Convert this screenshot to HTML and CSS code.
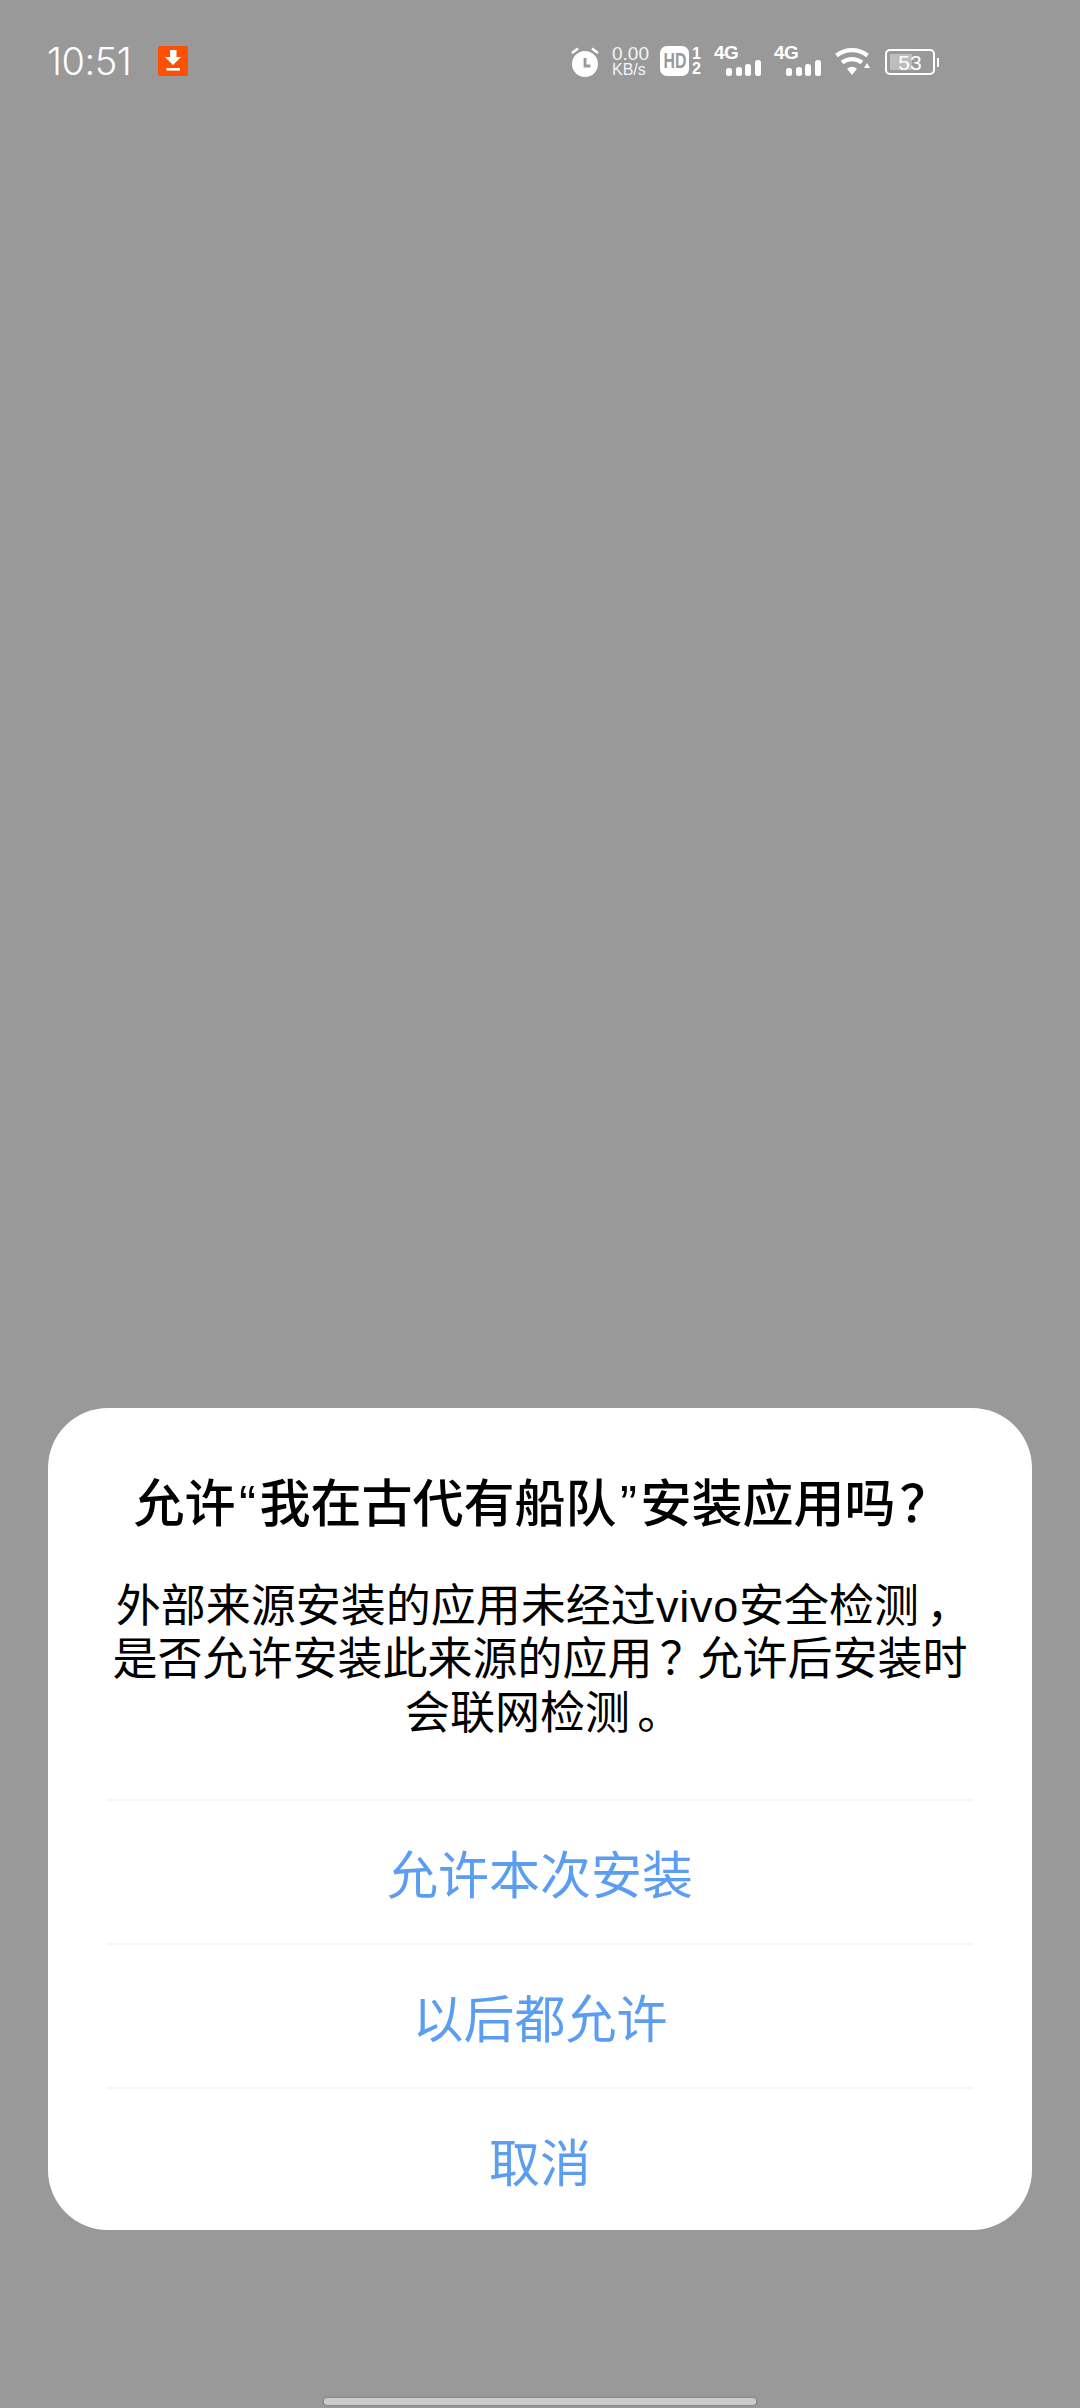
FILE: index.html
```html
<!DOCTYPE html>
<html lang="zh-CN">
<head>
<meta charset="utf-8">
<title>安装应用</title>
<link rel="stylesheet" href="styles.css">
</head>
<body>
<div class="screen">
  <header class="status">
    <div class="status-left">
      <span class="time">10:51</span>
      <svg class="dl" width="30" height="30" viewBox="0 0 30 30"><rect width="30" height="30" rx="2" fill="#fb5005"/><path d="M12 4h6.500v7h4.500l-8 8-8-8h5z" fill="#fff"/><rect x="8.500" y="22" width="13.500" height="2.600" fill="#fff"/></svg>
    </div>
    <div class="status-right">
      <svg class="alarm" width="30" height="32" viewBox="0 0 30 32"><circle cx="15" cy="18" r="13" fill="#fff"/><path d="M15 12v8h5.500" fill="none" stroke="#999" stroke-width="2.800"/><path d="M2 7l6-4.500M28 7l-6-4.500" stroke="#fff" stroke-width="2.600"/></svg>
      <div class="speed"><span class="speed-num">0.00</span><span class="speed-unit">KB/s</span></div>
      <div class="hd">
        <span class="hd-box"><span class="hd-text">HD</span></span>
        <div class="sims"><span>1</span><span>2</span></div>
      </div>
      <div class="net">
        <span class="net-label">4G</span>
        <div class="bars"><i class="b1"></i><i class="b2"></i><i class="b3"></i><i class="b4"></i></div>
      </div>
      <div class="net">
        <span class="net-label">4G</span>
        <div class="bars"><i class="b1"></i><i class="b2"></i><i class="b3"></i><i class="b4"></i></div>
      </div>
      <svg class="wifi" width="39" height="28" viewBox="0 0 39 28"><path d="M2.500 7.500A25 25 0 0 1 33.500 7.500" fill="none" stroke="#fff" stroke-width="4.200"/><path d="M8.100 14.500A16 16 0 0 1 27.900 14.500" fill="none" stroke="#fff" stroke-width="4.200"/><path d="M18 27L13 20.800A8 8 0 0 1 23 20.800z" fill="#fff"/><path d="M30 20l3-5 3 5z" fill="#fff"/></svg>
      <div class="battery"><div class="cell"><div class="fill"></div><span class="level">53</span></div><i class="nub"></i></div>
    </div>
  </header>
  <main class="spacer"></main>
  <section class="dialog">
    <h1 class="title">允许<span class="quote">“</span>我在古代有船队<span class="quote">”</span>安装应用吗<span class="punct title-mark">？</span></h1>
    <p class="message">外部来源安装的应用未经过<span class="latin">vivo</span>安全检测<span class="punct">，</span><br>是否允许安装此来源的应用<span class="punct">？</span>允许后安装时<br>会联网检测<span class="punct">。</span></p>
    <div class="actions">
      <button class="action">允许本次安装</button>
      <button class="action">以后都允许</button>
      <button class="action">取消</button>
    </div>
  </section>
  <footer class="nav"><div class="home"></div></footer>
</div>
</body>
</html>
```

FILE: styles.css
```css
* { box-sizing: border-box; margin: 0; padding: 0; }
html, body { width: 1080px; height: 2408px; overflow: hidden; }
body { background: #999999; font-family: "Liberation Sans", "Noto Sans CJK SC", sans-serif; }
.screen { width: 1080px; height: 2408px; display: flex; flex-direction: column; }

.status { height: 122px; flex-shrink: 0; padding: 0 141px 0 47px; display: flex; justify-content: space-between; align-items: center; }
.status-left { display: flex; align-items: center; gap: 25px; }
.time { font-family: Inter, "Liberation Sans", sans-serif; font-size: 38px; font-weight: 300; letter-spacing: -0.5px; color: #fff; width: 86px; white-space: nowrap; }
.dl { display: block; }
.status-right { display: flex; align-items: center; gap: 12px; color: #fff; }
.alarm { display: block; margin-top: 2px; }
.speed { display: flex; flex-direction: column; width: 36px; margin-top: 2px; white-space: nowrap; color: #f4f4f4; }
.speed-num { font-size: 19px; line-height: 16px; }
.speed-unit { font-size: 16px; line-height: 16px; }
.hd { display: flex; align-items: stretch; gap: 3px; width: 42px; height: 30px; }
.hd-box { width: 29px; height: 30px; background: #fff; border-radius: 7px; color: #999; display: flex; align-items: center; justify-content: center; flex-shrink: 0; }
.hd-text { display: block; font-size: 22px; font-weight: 700; line-height: 1; transform: scaleX(.72); }
.sims { display: flex; flex-direction: column; justify-content: space-between; font-size: 16px; font-weight: 700; line-height: 15px; }
.sims span { display: block; text-align: center; }
.net { width: 48px; height: 30px; display: flex; flex-direction: column; justify-content: space-between; }
.net-label { font-size: 19px; font-weight: 700; line-height: 14px; letter-spacing: -0.5px; }
.bars { display: flex; gap: 3.700px; align-items: flex-end; margin-left: 12px; height: 16px; }
.bars i { display: block; width: 6px; background: #fff; border-radius: 2.500px; }
.b1 { height: 8px; }
.b2 { height: 9px; }
.b3 { height: 12px; }
.b4 { height: 16px; }
.wifi { display: block; margin-top: 2px; }
.battery { display: flex; align-items: center; gap: 2px; margin-top: 2px; }
.cell { width: 50px; height: 26px; border: 2px solid #fff; border-radius: 5px; position: relative; display: flex; align-items: center; justify-content: center; }
.fill { position: absolute; left: 3px; top: 3px; bottom: 3px; width: 22px; background: #bdbdbd; }
.level { position: relative; font-size: 21px; line-height: 1; color: #fff; }
.nub { display: block; width: 2px; height: 9px; background: #fff; }

.spacer { flex: 1; }
.dialog { width: 984px; height: 822px; margin: 0 48px; background: #fff; border-radius: 60px; padding: 65px 60px 0; flex-shrink: 0; text-align: center; }
.title { font-size: 51px; font-weight: 500; line-height: 64px; color: #000; white-space: nowrap; }
.quote { font-family: "Liberation Sans", sans-serif; padding: 0 3.500px; }
.punct { margin-left: .16em; letter-spacing: -.16em; }
.title-mark { margin-left: .08em; letter-spacing: -.08em; }
.latin { letter-spacing: .8px; }
.message { font-size: 45px; font-weight: 400; line-height: 53.300px; color: #000; margin-top: 43px; white-space: nowrap; }
.actions { margin-top: 59px; display: flex; flex-direction: column; }
.action { height: 144px; border: 0; border-top: 2px solid #f6f6f6; background: none; font-family: inherit; font-size: 51px; color: #5b9df0; }

.nav { height: 178px; flex-shrink: 0; display: flex; align-items: flex-end; justify-content: center; padding-bottom: 3px; }
.home { width: 432px; height: 7px; background: #cbcbcb; border-radius: 3px; box-shadow: 0 0 3px rgba(0,0,0,.3); }
```
